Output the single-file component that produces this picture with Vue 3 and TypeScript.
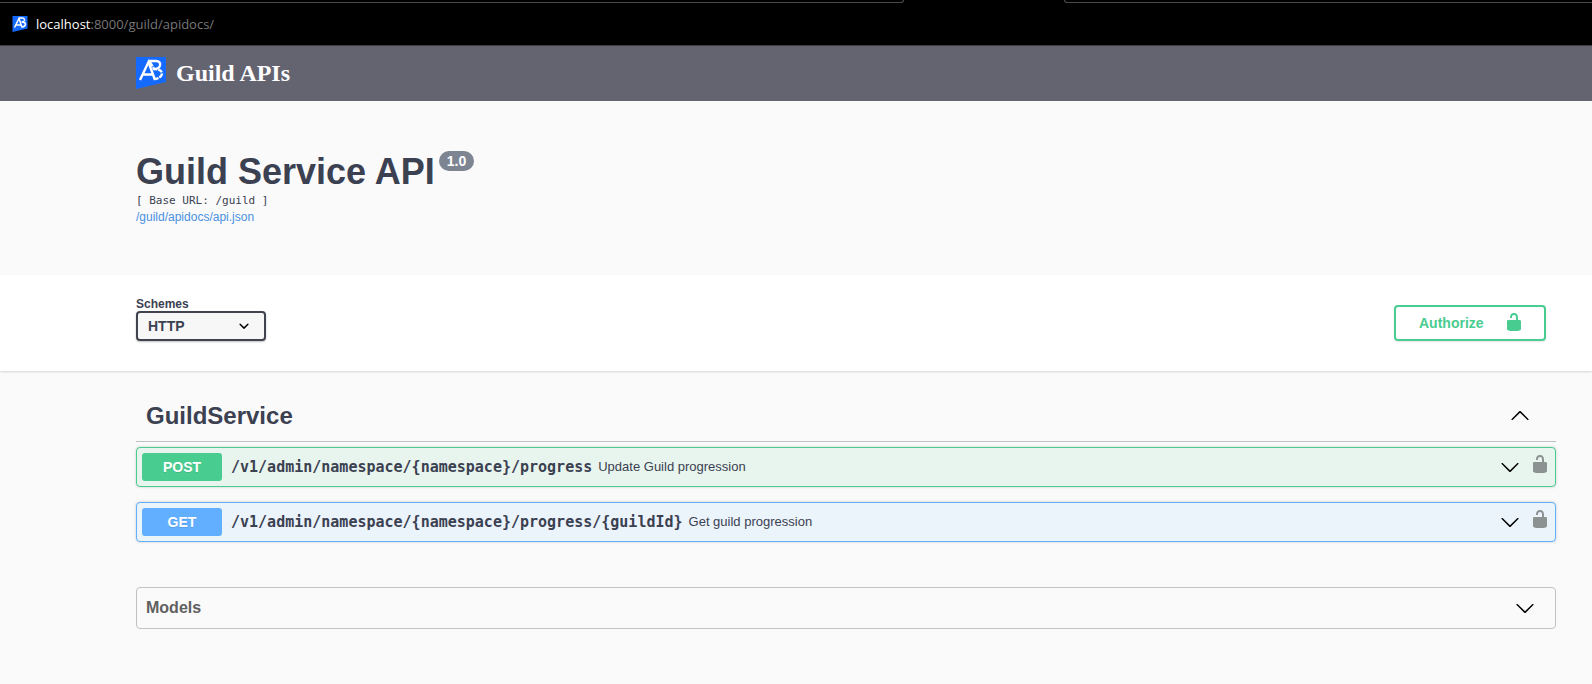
<script setup lang="ts">
import { ref } from 'vue'

interface Operation {
  method: string
  path: string
  summary: string
}

const lockPath =
  'M15.8 8H14V5.6C14 2.703 12.665 1 10 1 7.334 1 6 2.703 6 5.6V6h2v-.801C8 3.754 8.797 3 10 3c1.203 0 2 .754 2 2.199V8H4c-.553 0-1 .646-1 1.199V17c0 .549.428 1.139.951 1.307l1.197.387C5.672 18.861 6.55 19 7.1 19h5.8c.549 0 1.428-.139 1.951-.307l1.196-.387c.524-.167.953-.757.953-1.306V9.199C17 8.646 16.352 8 15.8 8z'
const chevronPath =
  'M17.418 6.109c.272-.268.709-.268.979 0s.271.701 0 .969l-7.908 7.83c-.27.268-.707.268-.979 0l-7.908-7.83c-.27-.268-.27-.701 0-.969.271-.268.709-.268.979 0L10 13.25l7.418-7.141z'

const scheme = ref('HTTP')
const open = ref(true)
const operations: Operation[] = [
  { method: 'POST', path: '/v1/admin/namespace/{namespace}/progress', summary: 'Update Guild progression' },
  { method: 'GET', path: '/v1/admin/namespace/{namespace}/progress/{guildId}', summary: 'Get guild progression' },
]
</script>

<template>
  <div class="page">
    <div class="browser">
      <div class="tabs">
        <span class="tab-edge before"></span>
        <span class="tab-edge after"></span>
      </div>
      <div class="address">
        <svg class="favicon" viewBox="0 0 30 32" aria-hidden="true">
          <path d="M0 0H30V25L0 32Z" fill="#146aff" />
          <g fill="none" stroke="#fff" stroke-width="3">
            <path d="M4 23L13 5L19 23M7 18H17" />
            <path d="M13 4H20Q25 5 24 9Q23 12 18 12Q26 12 26 17Q25 21 19 22" />
          </g>
        </svg>
        <span class="url"><span class="host">localhost</span>:8000/guild/apidocs/</span>
      </div>
    </div>

    <header class="topbar">
      <svg class="logo" viewBox="0 0 30 32" aria-hidden="true">
        <path d="M0 0H30V25L0 32Z" fill="#146aff" />
        <g fill="none" stroke="#fff" stroke-width="2.4">
          <path d="M4 23L12.500 5L19 23M7 17.500H17" />
          <path d="M13 4H20Q25 4.500 24 8.500Q23 12 18 12" />
          <path d="M14 5L18 12Q26 12 26 17Q25 21 19 22" stroke-dasharray="5 1" />
        </g>
      </svg>
      <span class="brand">Guild APIs</span>
    </header>

    <section class="info">
      <div class="title-row">
        <h1>Guild Service API</h1>
        <span class="version">1.0</span>
      </div>
      <pre class="base">[ Base URL: /guild ]</pre>
      <a class="spec" href="/guild/apidocs/api.json">/guild/apidocs/api.json</a>
    </section>

    <section class="schemes">
      <div class="field">
        <label for="scheme">Schemes</label>
        <div class="select">
          <select id="scheme" v-model="scheme">
            <option>HTTP</option>
          </select>
          <svg viewBox="0 0 20 20" aria-hidden="true">
            <path d="M13.418 7.859a.695.695 0 01.978 0 .68.68 0 010 .969l-3.908 3.83a.697.697 0 01-.979 0l-3.908-3.83a.68.68 0 010-.969.695.695 0 01.978 0L10 11l3.418-3.141z" />
          </svg>
        </div>
      </div>
      <button class="authorize" type="button">
        <span>Authorize</span>
        <svg viewBox="0 0 20 20" aria-hidden="true"><path :d="lockPath" /></svg>
      </button>
    </section>

    <main>
      <div class="tag">
        <h2>GuildService</h2>
        <button class="plain" type="button" aria-label="Toggle operations" :aria-expanded="open" @click="open = !open">
          <svg class="chevron" :class="{ up: open }" viewBox="0 0 20 20" aria-hidden="true"><path :d="chevronPath" /></svg>
        </button>
      </div>

      <div v-if="open" class="operations">
        <div v-for="op in operations" :key="op.method" class="operation" :class="op.method.toLowerCase()">
          <span class="method">{{ op.method }}</span>
          <span class="path">{{ op.path }}</span>
          <span class="summary">{{ op.summary }}</span>
          <button class="plain" type="button" aria-label="Expand operation">
            <svg class="chevron" viewBox="0 0 20 20" aria-hidden="true"><path :d="chevronPath" /></svg>
          </button>
          <button class="plain lock" type="button" aria-label="Authorization">
            <svg viewBox="0 0 20 20" aria-hidden="true"><path :d="lockPath" /></svg>
          </button>
        </div>
      </div>

      <section class="models">
        <h3>Models</h3>
        <button class="plain" type="button" aria-label="Expand models">
          <svg class="chevron" viewBox="0 0 20 20" aria-hidden="true"><path :d="chevronPath" /></svg>
        </button>
      </section>
    </main>
  </div>
</template>

<style>
body {
  margin: 0;
  background: #fafafa;
}
</style>

<style scoped>
.page {
  color: #3b4151;
  font-family: "Liberation Sans", Arial, sans-serif;
}
.page * {
  box-sizing: border-box;
}
h1, h2, h3, pre {
  margin: 0;
}
svg {
  display: block;
  flex: none;
}
.browser {
  height: 46px;
  background: #000;
  border-bottom: 1px solid #3d3d3d;
}
.tabs {
  display: flex;
  gap: 160px;
  height: 3px;
  overflow: hidden;
}
.tab-edge {
  border-bottom: 1px solid #4a4a4a;
}
.before {
  flex: 904;
  border-right: 1px solid #4a4a4a;
  border-bottom-right-radius: 4px;
}
.after {
  flex: 528;
  border-left: 1px solid #4a4a4a;
  border-bottom-left-radius: 4px;
}
.address {
  display: flex;
  align-items: center;
  gap: 8px;
  height: 42px;
  padding-left: 12px;
}
.favicon {
  width: 16px;
  height: 16px;
}
.url {
  color: #777;
  font: 13px/20px "Open Sans", sans-serif;
}
.host {
  color: #fff;
}
.topbar {
  display: flex;
  align-items: center;
  gap: 10px;
  height: 55px;
  padding: 0 36px 2px 136px;
  background: #646470;
}
.logo {
  width: 30px;
  height: 32px;
}
.brand {
  color: #fff;
  font: bold 24px/28px "Liberation Serif", "Times New Roman", serif;
}
.info {
  padding: 50px 36px 50px 136px;
}
.title-row {
  display: flex;
  align-items: flex-start;
  gap: 4px;
}
h1 {
  font-size: 36px;
  line-height: 42px;
}
.version {
  padding: 0 8px;
  border-radius: 10px;
  background: #7d8492;
  color: #fff;
  font-size: 14px;
  font-weight: bold;
  line-height: 20px;
}
.base {
  font: 11px/16px "DejaVu Sans Mono", monospace;
}
.spec {
  display: block;
  width: fit-content;
  color: #4990e2;
  font-size: 12px;
  line-height: 16px;
  text-decoration: none;
}
.schemes {
  display: flex;
  align-items: flex-end;
  justify-content: space-between;
  padding: 22px 46px 30px 136px;
  background: #fff;
  box-shadow: 0 1px 2px rgba(0, 0, 0, 0.15);
}
.field label {
  display: block;
  font-size: 12px;
  font-weight: bold;
  line-height: 14px;
}
.select {
  position: relative;
  width: 130px;
}
select {
  display: block;
  width: 100%;
  height: 30px;
  padding: 0 30px 0 10px;
  appearance: none;
  border: 2px solid #41444e;
  border-radius: 4px;
  background: #f7f7f7;
  box-shadow: 0 1px 2px rgba(0, 0, 0, 0.25);
  color: #3b4151;
  font: bold 14px/20px "Liberation Sans", Arial, sans-serif;
}
.select svg {
  position: absolute;
  top: 5px;
  right: 12px;
  width: 20px;
  height: 20px;
  pointer-events: none;
}
.authorize {
  display: flex;
  align-items: center;
  justify-content: space-between;
  width: 152px;
  height: 36px;
  padding: 0 20px 0 23px;
  border: 2px solid #49cc90;
  border-radius: 4px;
  background: transparent;
  box-shadow: 0 1px 2px rgba(0, 0, 0, 0.1);
  color: #49cc90;
  font: bold 14px/20px "Liberation Sans", Arial, sans-serif;
}
.authorize svg {
  width: 20px;
  height: 20px;
  margin-bottom: 2px;
  fill: #49cc90;
}
main {
  padding: 20px 36px 40px 136px;
}
.plain {
  padding: 0;
  border: 0;
  background: none;
}
.chevron {
  width: 20px;
  height: 20px;
}
.up {
  transform: rotate(180deg);
}
.tag {
  display: flex;
  align-items: center;
  justify-content: space-between;
  height: 51px;
  padding: 0 26px 0 10px;
  border-bottom: 1px solid #c0c1c4;
}
h2 {
  font-size: 24px;
  line-height: 28px;
}
.operations {
  display: grid;
  gap: 15px;
  padding: 5px 0 45px;
}
.operation {
  display: flex;
  align-items: center;
  height: 40px;
  padding: 0 5px;
  border: 1px solid;
  border-radius: 4px;
  box-shadow: 0 0 3px rgba(0, 0, 0, 0.19);
}
.post {
  border-color: #49cc90;
  background: #e8f5ee;
}
.get {
  border-color: #61affe;
  background: #ebf3fb;
}
.method {
  width: 80px;
  border-radius: 3px;
  color: #fff;
  font-size: 14px;
  font-weight: bold;
  line-height: 28px;
  text-align: center;
  text-shadow: 0 1px 0 rgba(0, 0, 0, 0.1);
}
.post .method {
  background: #49cc90;
}
.get .method {
  background: #61affe;
}
.path {
  margin: 0 6px 0 9px;
  font: bold 15px/20px "DejaVu Sans Mono", monospace;
}
.summary {
  flex: 1;
  font-size: 13px;
  line-height: 20px;
}
.lock {
  margin: 0 0 6px 10px;
}
.lock svg {
  width: 20px;
  height: 20px;
  fill: #8c9292;
}
.models {
  display: flex;
  align-items: center;
  justify-content: space-between;
  height: 42px;
  padding: 0 20px 0 9px;
  border: 1px solid #c0c1c4;
  border-radius: 4px;
}
h3 {
  color: #606060;
  font-size: 16px;
  line-height: 20px;
}
</style>
